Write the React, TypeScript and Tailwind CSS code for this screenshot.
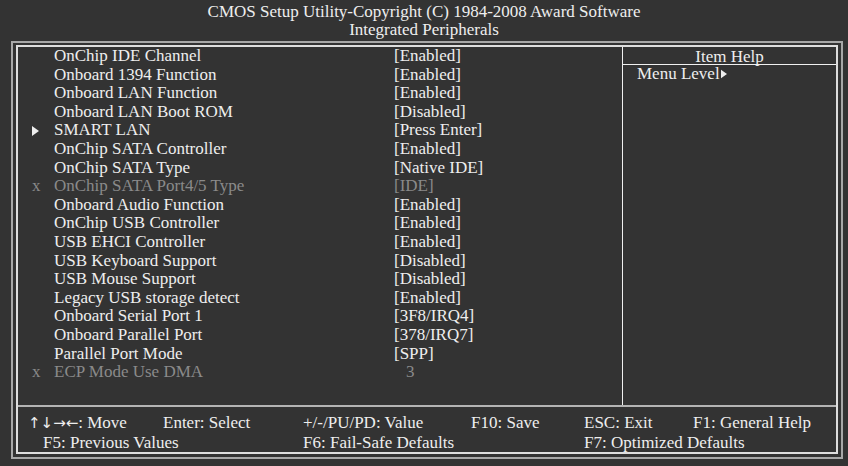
import React from "react";

type Row = { mark: "" | "x" | ">"; label: string; value: string };

const rows: Row[] = [
  { mark: "", label: "OnChip IDE Channel", value: "[Enabled]" },
  { mark: "", label: "Onboard 1394 Function", value: "[Enabled]" },
  { mark: "", label: "Onboard LAN Function", value: "[Enabled]" },
  { mark: "", label: "Onboard LAN Boot ROM", value: "[Disabled]" },
  { mark: ">", label: "SMART LAN", value: "[Press Enter]" },
  { mark: "", label: "OnChip SATA Controller", value: "[Enabled]" },
  { mark: "", label: "OnChip SATA Type", value: "[Native IDE]" },
  { mark: "x", label: "OnChip SATA Port4/5 Type", value: "[IDE]" },
  { mark: "", label: "Onboard Audio Function", value: "[Enabled]" },
  { mark: "", label: "OnChip USB Controller", value: "[Enabled]" },
  { mark: "", label: "USB EHCI Controller", value: "[Enabled]" },
  { mark: "", label: "USB Keyboard Support", value: "[Disabled]" },
  { mark: "", label: "USB Mouse Support", value: "[Disabled]" },
  { mark: "", label: "Legacy USB storage detect", value: "[Enabled]" },
  { mark: "", label: "Onboard Serial Port 1", value: "[3F8/IRQ4]" },
  { mark: "", label: "Onboard Parallel Port", value: "[378/IRQ7]" },
  { mark: "", label: "Parallel Port Mode", value: "[SPP]" },
  { mark: "x", label: "ECP Mode Use DMA", value: "3" },
];

function Arrow({ className }: { className?: string }) {
  return (
    <svg viewBox="0 0 7 10" className={className} fill="currentColor">
      <path d="M0 0 L7 5 L0 10 Z" />
    </svg>
  );
}

function SettingRow({ row }: { row: Row }) {
  const off = row.mark === "x";
  return (
    <div className={`flex h-[18.6px] leading-[18.6px] ${off ? "text-[#8a8a8a]" : ""}`}>
      <div className="w-[36px] pl-[14px] flex items-center">
        {row.mark === "x" && <span>x</span>}
        {row.mark === ">" && <Arrow className="w-[7px] h-[10px] text-[#eeeeee]" />}
      </div>
      <div className="w-[340px]">{row.label}</div>
      <div className={row.value === "3" ? "pl-[12px]" : ""}>{row.value}</div>
    </div>
  );
}

export default function App() {
  return (
    <div
      className="w-[848px] h-[466px] bg-[#333333] text-[#eeeeee] text-[17px] overflow-hidden"
      style={{ fontFamily: '"Liberation Serif", "Times New Roman", serif' }}
    >
      <div className="pt-[3px] text-center leading-[18px]">
        <div>CMOS Setup Utility-Copyright (C) 1984-2008 Award Software</div>
        <div>Integrated Peripherals</div>
      </div>

      <div className="mt-[2px] ml-[11px] w-[832px] h-[418px] border-2 border-[#a8a8a8] pt-[2px] px-[3px] pb-[3px]">
        <div className="h-full border-2 border-[#dedede] flex flex-col">
          <div className="flex h-[358px]">
            <div className="w-[604px]">
              {rows.map((r) => (
                <SettingRow key={r.label} row={r} />
              ))}
            </div>
            <div className="flex-1 border-l border-[#f0f0f0]">
              <div className="h-[18px] pt-[1px] leading-[17px] text-center border-b border-[#f0f0f0]">Item Help</div>
              <div className="pl-[14px] leading-[18.6px] flex items-center">
                Menu Level
                <Arrow className="w-[6px] h-[10px] ml-[1px]" />
              </div>
            </div>
          </div>

          <div className="flex-1 border-t-2 border-[#b4b4b4] pt-[6px] leading-[19px]">
            <div className="flex pl-[10px]">
              <div className="w-[135px]">
                <span className="text-[15px]" style={{ fontFamily: '"DejaVu Sans", sans-serif' }}>
                  ↑↓→←
                </span>
                : Move
              </div>
              <div className="w-[140px]">Enter: Select</div>
              <div className="w-[168px]">+/-/PU/PD: Value</div>
              <div className="w-[113px]">F10: Save</div>
              <div className="w-[109px]">ESC: Exit</div>
              <div>F1: General Help</div>
            </div>
            <div className="flex pl-[25px]">
              <div className="w-[260px]">F5: Previous Values</div>
              <div className="w-[281px]">F6: Fail-Safe Defaults</div>
              <div>F7: Optimized Defaults</div>
            </div>
          </div>
        </div>
      </div>
    </div>
  );
}
